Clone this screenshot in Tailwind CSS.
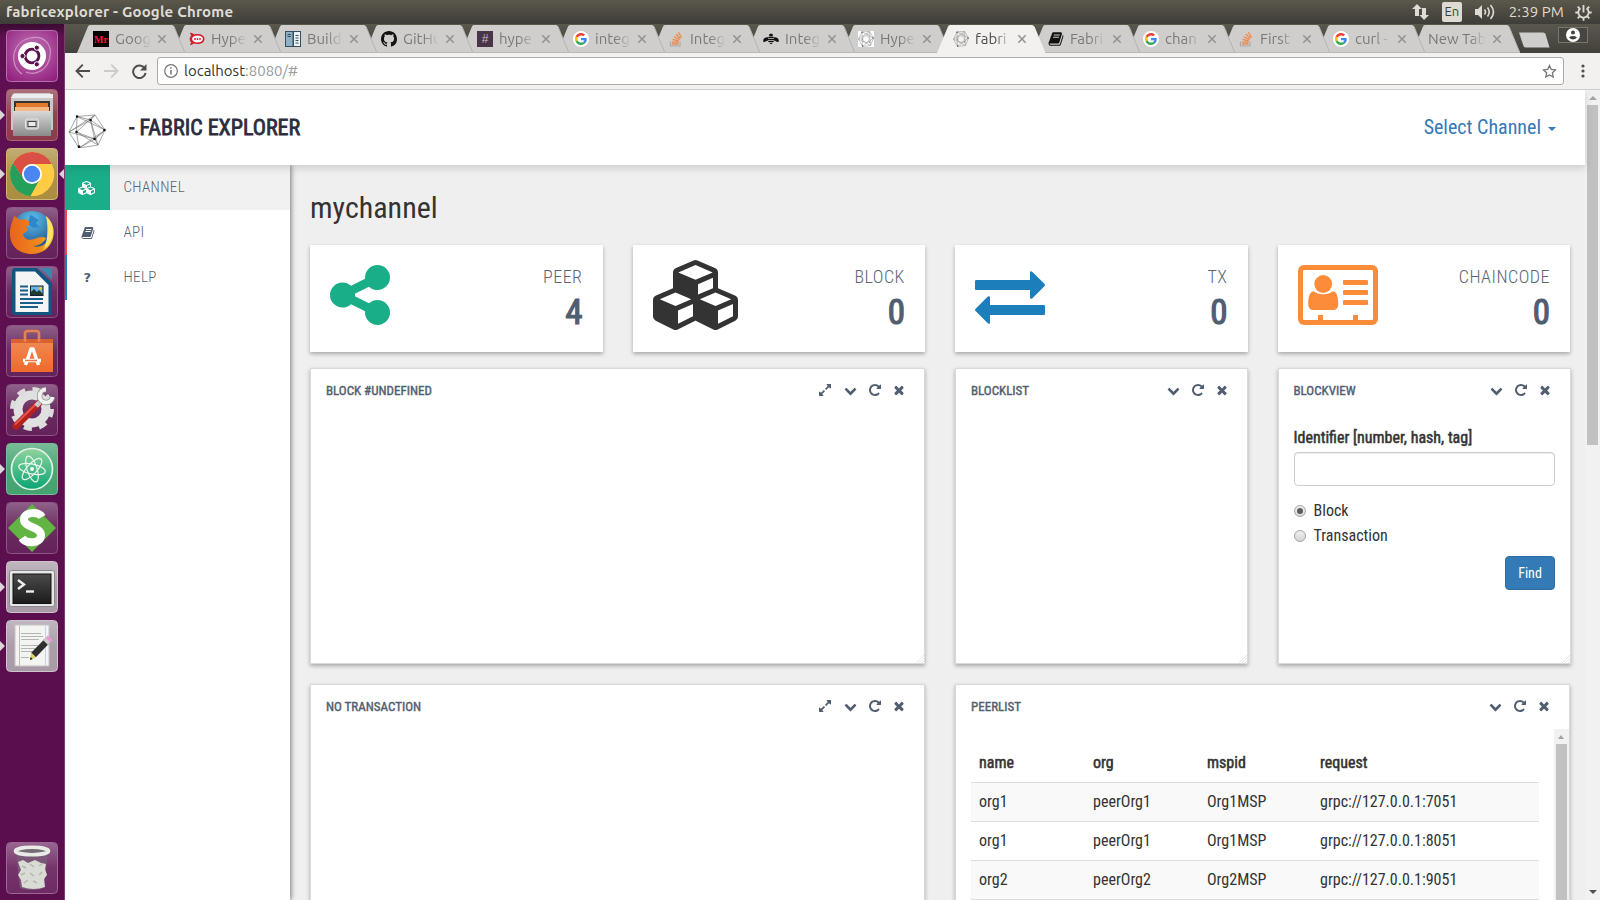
<!DOCTYPE html>
<html lang="en">
<head>
<meta charset="utf-8">
<title>fabricexplorer</title>
<script src="https://cdn.jsdelivr.net/npm/@tailwindcss/browser@4"></script>
</head>
<body class="h-[900px] w-[1600px] overflow-hidden bg-white font-['Roboto_Condensed',Roboto,sans-serif] text-[#333]">

<svg class="absolute h-0 w-0" xmlns="http://www.w3.org/2000/svg">
  <defs>
    <linearGradient id="gloss" x1="0" y1="0" x2="0" y2="1"><stop offset="0" stop-color="#fff" stop-opacity=".3"/><stop offset=".5" stop-color="#fff" stop-opacity=".07"/><stop offset="1" stop-color="#fff" stop-opacity=".03"/></linearGradient>
    <linearGradient id="steel" x1="0" y1="0" x2="0" y2="1"><stop offset="0" stop-color="#d9d9d9"/><stop offset="1" stop-color="#8b8b8b"/></linearGradient>
    <linearGradient id="orangeBag" x1="0" y1="0" x2="0" y2="1"><stop offset="0" stop-color="#f08a55"/><stop offset="1" stop-color="#ef6a2b"/></linearGradient>
    <linearGradient id="atomBg" x1="0" y1="0" x2="0" y2="1"><stop offset="0" stop-color="#8fd39c"/><stop offset="1" stop-color="#0aa573"/></linearGradient>
    <linearGradient id="termBg" x1="0" y1="0" x2="0" y2="1"><stop offset="0" stop-color="#4b4b4b"/><stop offset="1" stop-color="#1b1b1b"/></linearGradient>
    <radialGradient id="dash" cx=".5" cy=".4" r=".7"><stop offset="0" stop-color="#c27ab8"/><stop offset="1" stop-color="#93207f"/></radialGradient>
    <radialGradient id="globe" cx=".5" cy=".2" r=".8"><stop offset="0" stop-color="#5fc3ee"/><stop offset="1" stop-color="#123e7c"/></radialGradient>
    <linearGradient id="foxBody" x1="0" y1="0" x2="1" y2="0"><stop offset="0" stop-color="#e8641b"/><stop offset=".7" stop-color="#f08a1d"/><stop offset="1" stop-color="#fbd53c"/></linearGradient>
  </defs>
  <symbol id="i-share" viewBox="0 0 1792 1792"><path d="M1216 1024q133 0 226.5 93.5t93.5 226.500-93.500 226.500-226.500 93.500-226.500-93.500-93.500-226.500q0-12 2-34l-360-180q-92 86-218 86-133 0-226.500-93.500t-93.500-226.500 93.500-226.500 226.500-93.500q126 0 218 86l360-180q-2-22-2-34 0-133 93.500-226.500t226.500-93.500 226.500 93.500 93.500 226.500-93.500 226.500-226.500 93.500q-126 0-218-86l-360 180q2 22 2 34t-2 34l360 180q92-86 218-86z"/></symbol>
  <symbol id="i-cubes" viewBox="0 0 2304 1792"><path d="M640 1632l384-192v-314l-384 164v342zm-64-454l404-173-404-173-404 173zm1088 454l384-192v-314l-384 164v342zm-64-454l404-173-404-173-404 173zm-448-293l384-165v-266l-384 164v267zm-64-379l441-189-441-189-441 189zm1088 518v416q0 36-19 67t-52 47l-448 224q-25 14-57 14t-57-14l-448-224q-4-2-7-4-2 2-7 4l-448 224q-25 14-57 14t-57-14l-448-224q-33-16-52-47t-19-67v-416q0-38 21.500-70t56.500-48l434-186v-400q0-38 21.500-70t56.500-48l448-192q23-10 50-10t50 10l448 192q35 16 56.500 48t21.500 70v400l434 186q36 16 57 48t21 70z"/></symbol>
  <symbol id="i-exchange" viewBox="0 0 1792 1792"><path d="M1792 1184v192q0 13-9.500 22.500t-22.500 9.500h-1376v192q0 13-9.500 22.500t-22.500 9.500q-12 0-24-10l-319-320q-9-9-9-22 0-14 9-23l320-320q9-9 23-9 13 0 22.500 9.500t9.500 22.500v192h1376q13 0 22.500 9.500t9.500 22.500zm0-544q0 14-9 23l-320 320q-9 9-23 9-13 0-22.500-9.500t-9.500-22.500v-192h-1376q-13 0-22.500-9.500t-9.500-22.500v-192q0-13 9.500-22.500t22.500-9.500h1376v-192q0-14 9-23t23-9q12 0 24 10l319 319q9 9 9 23z"/></symbol>
  <symbol id="i-expand" viewBox="0 0 1792 1792"><path d="M883 1056q0 13-10 23l-332 332 144 144q19 19 19 45t-19 45-45 19h-448q-26 0-45-19t-19-45v-448q0-26 19-45t45-19 45 19l144 144 332-332q10-10 23-10t23 10l114 114q10 10 10 23zm781-864v448q0 26-19 45t-45 19-45-19l-144-144-332 332q-10 10-23 10t-23-10l-114-114q-10-10-10-23t10-23l332-332-144-144q-19-19-19-45t19-45 45-19h448q26 0 45 19t19 45z"/></symbol>
  <symbol id="i-down" viewBox="0 0 1792 1792"><path d="M1683 808l-742 741q-19 19-45 19t-45-19l-742-741q-19-19-19-45.500t19-45.500l166-165q19-19 45-19t45 19l531 531 531-531q19-19 45-19t45 19l166 165q19 19 19 45.500t-19 45.500z"/></symbol>
  <symbol id="i-repeat" viewBox="0 0 1792 1792"><path d="M1664 256v448q0 26-19 45t-45 19h-448q-42 0-59-40-17-39 14-69l138-138q-148-137-349-137-104 0-198.500 40.500t-163.500 109.500-109.500 163.500-40.500 198.500 40.500 198.500 109.500 163.500 163.500 109.500 198.500 40.500q119 0 225-52t179-147q7-10 23-12 15 0 25 9l137 138q9 8 9.500 20.500t-7.500 22.500q-109 132-264 204.500t-327 72.500q-156 0-298-61t-245-164-164-245-61-298 61-298 164-245 245-164 298-61q147 0 284.500 55.500t244.500 156.500l130-129q29-31 70-14 39 17 39 59z"/></symbol>
  <symbol id="i-times" viewBox="0 0 1792 1792"><path d="M1490 1322q0 40-28 68l-136 136q-28 28-68 28t-68-28l-294-294-294 294q-28 28-68 28t-68-28l-136-136q-28-28-28-68t28-68l294-294-294-294q-28-28-28-68t28-68l136-136q28-28 68-28t68 28l294 294 294-294q28-28 68-28t68 28l136 136q28 28 28 68t-28 68l-294 294 294 294q28 28 28 68z"/></symbol>
  <symbol id="i-book" viewBox="0 0 1792 1792"><path d="M1703 478q40 57 18 129l-275 906q-19 64-76.500 107.500t-122.500 43.500h-923q-77 0-148.500-53.500t-99.500-131.500q-24-67-2-127 0-4 3-27t4-37q1-8-3-21.500t-3-19.500q2-11 8-21t16.500-23.500 16.500-23.500q23-38 45-91.500t30-91.500q3-10 .5-30t-.5-28q3-11 17-28t17-23q21-36 42-92t25-90q1-9-2.500-32t.5-28q4-13 22-30.500t22-22.500q19-26 42.500-84.500t27.500-96.500q1-8-3-25.500t-2-26.500q2-8 9-18t18-23 17-21q8-12 16.500-30.500t15-35 16-36 19.500-32 26.500-23.500 36-11.500 47.500 5.500l-1 3q38-9 51-9h761q74 0 114 56t18 130l-274 906q-36 119-71.500 153.500t-128.500 34.500h-869q-27 0-38 15-11 16-1 43 24 70 144 70h923q29 0 56-15.500t35-41.500l300-987q7-22 5-57 38 15 59 43zm-1064 2q-4 13 2 22.500t20 9.500h608q13 0 25.500-9.500t16.500-22.500l21-64q4-13-2-22.500t-20-9.500h-608q-13 0-25.500 9.500t-16.500 22.500zm-83 256q-4 13 2 22.500t20 9.500h608q13 0 25.500-9.500t16.500-22.500l21-64q4-13-2-22.500t-20-9.500h-608q-13 0-25.500 9.500t-16.500 22.500z"/></symbol>
  <symbol id="i-card" viewBox="0 0 80 60"><rect x="2.500" y="2.500" width="75" height="55" rx="3.500" fill="none" stroke="currentColor" stroke-width="5"/><circle cx="25.200" cy="19" r="8.900"/><path d="M15.500 26.300c2.500 1.800 6 3 9.800 3s7.200-1.200 9.700-3c4 .6 5.300 6.500 5.300 12.200 0 4-1.800 6.500-5 6.500H15.200c-3.200 0-5-2.500-5-6.500 0-5.700 1.300-11.600 5.300-12.200z"/><rect x="45" y="15" width="25" height="5" rx="1"/><rect x="45" y="25" width="25" height="5" rx="1"/><rect x="45" y="35" width="25" height="5" rx="1"/><path d="M20 50h5v7h-5zM55 50h5v7h-5z"/></symbol>
  <symbol id="i-net" viewBox="0 0 38 34"><g fill="none" stroke="#777" stroke-width=".65"><path d="M9 2.500L27 1l10 15-7 15-19 3L1 18z"/><path d="M9 2.500L22.500 6 37 16 27 25 11 34 8.500 18z"/><path d="M27 1L8.500 18l21.500 13M27 1L22.500 6 30 31M1 18L22.500 6M1 18l25.500 7M37 16L9 2.500M27 1L1 18M37 16L26.500 25 30 31M8.500 18l18 7M37 16L11 34M22.500 6l4 19"/></g><g fill="#111"><rect x="7.900" y="1.400" width="2.300" height="2.300"/><rect x="21.500" y="5" width="2.200" height="2.200"/><rect x="35.300" y="14.900" width="2.300" height="2.300"/><rect x="25.500" y="23.900" width="2.200" height="2.200"/><rect x="9.800" y="31.500" width="2.400" height="2.400"/><rect x="7.400" y="16.900" width="2.200" height="2.200"/></g></symbol>
  <symbol id="i-netsmall" viewBox="0 0 16 16"><g fill="none" stroke="#888" stroke-width=".5"><path d="M4 .8L11.500.5 15.500 7l-3 7.500L4.500 15.500.5 8z"/><path d="M4 .8L15.500 7 4.500 15.500zM11.500.5L.5 8l12 6.500z"/><circle cx="8" cy="8" r="3.400"/></g><g fill="#555"><circle cx="4" cy="1.200" r=".7"/><circle cx="15" cy="7" r=".7"/><circle cx="4.600" cy="15" r=".7"/><circle cx="10" cy="3" r=".5"/><circle cx="4" cy="8" r=".5"/><circle cx="11.500" cy="11" r=".5"/></g></symbol>
  <symbol id="i-google" viewBox="0 0 48 48"><circle cx="24" cy="24" r="24" fill="#fff"/><g transform="translate(6 6) scale(.75)"><path fill="#EA4335" d="M24 9.500c3.540 0 6.710 1.220 9.210 3.600l6.850-6.850C35.900 2.380 30.470 0 24 0 14.620 0 6.510 5.380 2.560 13.220l7.980 6.190C12.430 13.720 17.740 9.500 24 9.500z"/><path fill="#4285F4" d="M46.980 24.550c0-1.570-.15-3.090-.38-4.550H24v9.020h12.940c-.58 2.960-2.260 5.480-4.780 7.180l7.730 6c4.510-4.180 7.090-10.360 7.090-17.650z"/><path fill="#FBBC05" d="M10.530 28.590c-.48-1.450-.76-2.990-.76-4.590s.27-3.140.76-4.590l-7.980-6.190C.92 16.460 0 20.120 0 24c0 3.880.92 7.540 2.560 10.780l7.970-6.190z"/><path fill="#34A853" d="M24 48c6.480 0 11.930-2.130 15.890-5.810l-7.730-6c-2.150 1.450-4.920 2.300-8.160 2.300-6.260 0-11.570-4.220-13.470-9.910l-7.980 6.190C6.510 42.620 14.620 48 24 48z"/></g></symbol>
  <symbol id="i-so" viewBox="0 0 16 16"><path d="M2.500 10.500v4.500h9.500v-4.500" fill="none" stroke="#a9a9a9" stroke-width="1.200"/><g stroke="#ee8a4c" stroke-width="1.300"><path d="M4 13h6.500M4 10.800l6.500.6M4.600 8.300l6.200 1.700M5.900 5.600l5.600 3.200M8 3l4.400 4.700M10.500 1.200l3 5.400"/></g></symbol>
  <symbol id="i-github" viewBox="0 0 16 16"><path d="M8 0C3.580 0 0 3.580 0 8c0 3.540 2.290 6.530 5.470 7.590.4.070.55-.17.55-.38 0-.19-.01-.82-.01-1.490-2.010.37-2.530-.49-2.690-.94-.09-.23-.48-.94-.82-1.130-.28-.15-.68-.52-.01-.53.63-.01 1.080.58 1.230.82.720 1.210 1.870.87 2.330.66.070-.52.280-.87.510-1.070-1.780-.2-3.640-.89-3.640-3.950 0-.87.310-1.590.82-2.150-.08-.2-.36-1.020.08-2.120 0 0 .67-.21 2.200.82.640-.18 1.320-.27 2-.27s1.360.09 2 .27c1.530-1.040 2.200-.82 2.200-.82.440 1.100.16 1.920.08 2.120.51.560.82 1.270.82 2.150 0 3.070-1.870 3.750-3.650 3.950.29.250.54.730.54 1.480 0 1.070-.01 1.930-.01 2.200 0 .21.150.46.550.38A8.010 8.010 0 0016 8c0-4.420-3.580-8-8-8z"/></symbol>
  <symbol id="i-chat" viewBox="0 0 16 16"><path d="M.7 1.800c1.900 0 3.400.6 4.500 1.600C6 3.100 7 3 8.200 3 12.500 3 15.500 5 15.500 8s-3 5-7.300 5c-1.200 0-2.200-.1-3.100-.4-1 .9-2.600 1.500-4.400 1.500.9-1 1.400-2 1.300-3C1 10.300.7 9.200.7 8s.4-2.200 1.300-3C2 3.900 1.600 2.800.7 1.800z" fill="#d1202f"/><ellipse cx="8.500" cy="8" rx="5.400" ry="3.400" fill="#fff"/><g fill="#d1202f"><circle cx="6" cy="8" r=".9"/><circle cx="8.500" cy="8" r=".9"/><circle cx="11" cy="8" r=".9"/></g></symbol>
  <symbol id="i-build" viewBox="0 0 16 16"><rect width="16" height="16" fill="#37505f"/><rect x="1" y="1" width="6.500" height="14" fill="#8fb0c2"/><rect x="9" y="1" width="6" height="14" fill="#eef2f4"/><path d="M2.500 3.500h3.500M2.500 5.500h3.500M10.500 4.500h3M10.500 7h3M10.500 9.500h3M10.500 12h3" stroke="#37505f"/></symbol>
  <symbol id="i-bee" viewBox="0 0 16 16"><path d="M6 4.200C6 3.300 7 2.800 8 2.800s2 .5 2 1.400l-.8 1H6.800zM.2 10C0 7.500 2 6 5.300 6.200L4.800 10C3.500 9 2.500 11 1.500 11S.3 10.600.2 10zM15.800 10C16 7.500 14 6 10.700 6.200l.5 3.800c1.300-1 2.300 1 3.300 1s1.200-.4 1.300-1zM5.500 5.800h5V7h-5zM5 7.800h6v1.200H5zM5.200 9.800h5.600V11H5.200zM6 11.700h4L8 13.200z"/></symbol>
  <symbol id="i-cross" viewBox="0 0 10 10"><path d="M1.300 1.300l7.400 7.400M8.700 1.300L1.300 8.700" stroke="currentColor" stroke-width="1.500"/></symbol>
  <symbol id="i-grip" viewBox="0 0 9 9"><path d="M1 9l8-8M4 9l5-5M7 9l2-2" stroke="#dedede" stroke-width=".8"/></symbol>
</svg>

<!-- System panel -->
<header class="flex h-6 items-center justify-between bg-linear-to-b from-[#5b584b] to-[#3e3d38] pr-[8px] pl-[6px] font-['Ubuntu','Noto_Sans',sans-serif] text-[15px] text-[#dfdbd2]">
  <span class="font-bold tracking-[0.180px]">fabricexplorer - Google Chrome</span>
  <div class="flex items-center">
    <svg class="h-[16px] w-[17px]" viewBox="0 0 17 16" fill="#dfdbd2"><path d="M5 0l5 5H7v7H3V5H0zM12 16l5-5h-3V4h-4v7H7.500z"/></svg>
    <span class="ml-[13px] flex h-5 w-5 items-center justify-center rounded-[2px] bg-[#dfdbd2] text-[13px] text-[#3e3d38]">En</span>
    <svg class="ml-[13px] h-[16px] w-[21px]" viewBox="0 0 21 16"><path d="M0 5h3l4-4v14l-4-4H0z" fill="#dfdbd2"/><path d="M9.500 5.500q2 2.500 0 5M12.500 3.500q3.500 4.500 0 9M15.500 1q6 7 0 14" fill="none" stroke="#dfdbd2" stroke-width="1.600"/></svg>
    <span class="ml-[13px] tracking-[0.100px]">2:39 PM</span>
    <svg class="ml-[11px] h-[17px] w-[17px]" viewBox="0 0 17 17" fill="none" stroke="#dfdbd2"><path d="M5.500 4.200a5.200 5.200 0 1 0 6 0" stroke-width="1.800"/><path d="M8.500 1v7.500" stroke-width="1.800"/><path d="M.3 8.500h3M13.700 8.500h3M8.500 13.500v3.300M2.700 14.300l2.200-2.200M14.300 14.300l-2.200-2.200M2.700 2.700l2 2M14.300 2.700l-2 2" stroke-width="1.800"/></svg>
  </div>
</header>

<div class="flex h-[876px] overflow-hidden">
  <!-- Launcher -->
  <nav class="relative flex w-[65px] shrink-0 flex-col items-start gap-[7px] border-r border-[#7d3c73] bg-linear-to-b from-[#3b0a33] via-[#5f1052] via-[1.500%] to-[#5a0e4d] pt-[6px] pl-[6px]">
    <svg class="size-[52px]" viewBox="0 0 52 52"><rect x=".5" y=".5" width="51" height="51" rx="4" fill="url(#dash)" stroke="#b470a8"/><path d="M16 44C2 34 6 12 24 8 38 5 46 14 44 26c-2 14-14 20-24 16" fill="none" stroke="#d9a6d2" stroke-width="1.200" opacity=".8"/><circle cx="26" cy="26" r="14" fill="#fff"/><circle cx="26" cy="26" r="6.900" fill="none" stroke="#5b0f4e" stroke-width="2.900"/><g fill="#5b0f4e" stroke="#fff" stroke-width="1"><circle cx="16.500" cy="26" r="2.600"/><circle cx="30.800" cy="17.700" r="2.600"/><circle cx="30.800" cy="34.300" r="2.600"/></g></svg>
    <svg class="size-[52px]" viewBox="0 0 52 52"><rect x=".5" y=".5" width="51" height="51" rx="4" fill="#893545" stroke="#a8646f"/><rect x="1" y="1" width="50" height="50" rx="4" fill="url(#gloss)"/><path d="M8 4h36l3 5v32H5V9z" fill="#c9c9c9"/><path d="M5 9h42V5H7z" fill="#ececec"/><rect x="8" y="12" width="36" height="12" fill="#3a332e"/><path d="M10 14h32v8H10z" fill="#e07b2c"/><path d="M9 18h34v4H9z" fill="#f5b981"/><path d="M7 22h38v25H7z" fill="url(#steel)"/><rect x="19.500" y="30" width="13" height="10" rx="2" fill="#bdbdbd" stroke="#e8e8e8"/><rect x="22" y="32.500" width="8" height="5" fill="#e8e8e8" stroke="#444"/></svg>
    <svg class="size-[52px]" viewBox="0 0 52 52"><rect x=".5" y=".5" width="51" height="51" rx="4" fill="#a98a3a" stroke="#cdb877"/><rect x="1" y="1" width="50" height="50" rx="4" fill="url(#gloss)"/><circle cx="26" cy="26" r="22" fill="#fc4"/><path d="M7 15a22 22 0 0 0 17.500 33L34 31 26 26 17.500 30z" fill="#24a05a"/><path d="M7 15A22 22 0 0 1 45.700 16H26A10 10 0 0 0 17 30z" fill="#db5044"/><path d="M45.700 16H26a10 10 0 0 1 8.500 15L25 48A22 22 0 0 0 45.700 16z" fill="#fc4"/><circle cx="26" cy="26" r="10" fill="#fff"/><circle cx="26" cy="26" r="8.200" fill="#4a86f0"/></svg>
    <svg class="size-[52px]" viewBox="0 0 52 52"><rect x=".5" y=".5" width="51" height="51" rx="4" fill="#5f1c55" stroke="#8d5585"/><rect x="1" y="1" width="50" height="50" rx="4" fill="url(#gloss)"/><circle cx="26" cy="25" r="21" fill="url(#globe)"/><path d="M24 8c4 1 6 4 9 5l-3 3 3 4-6 1-5-4z" fill="#2f86c8"/><path d="M8 9c2 1 4 2 6 4 3-1 6-1 9 1 1 3 0 5-3 6l2 3-5 4c1 5 6 7 11 5 5-2 9-3 12-1-2 5-8 8-13 8 9 3 18-4 17-18 0-5-2-9-5-12 8 5 10 14 8 22-3 11-12 16-21 16C12 47 4 38 4 27c0-7 1-9 4-18z" fill="url(#foxBody)"/><path d="M40 9c6 5 8 13 6 21-1 5-4 9-8 12 3-7 5-20 2-33z" fill="#fce46a"/></svg>
    <svg class="size-[52px]" viewBox="0 0 52 52"><rect x=".5" y=".5" width="51" height="51" rx="4" fill="#5f1c55" stroke="#8d5585"/><rect x="1" y="1" width="50" height="50" rx="4" fill="url(#gloss)"/><path d="M9 2h22l15 15v32H9a3 3 0 0 1-3-3V5a3 3 0 0 1 3-3z" fill="#0f5580"/><path d="M34 2h9q3 0 3 3v9z" fill="#3b86ad"/><path d="M9.500 5.500H29L42.500 19v27h-33z" fill="#f5f5f5"/><path d="M14 20.500h8M14 24.500h8M14 28.500h8M14 33h23M14 37h23M14 41h18" stroke="#1a5f8c" stroke-width="1.800"/><rect x="24.500" y="20" width="12.500" height="9.500" fill="#69b4e8" stroke="#123"/><path d="M25 29v-3l3-3 3 3 2-2 4 4v1z" fill="#1d3b33"/><circle cx="34.500" cy="22.500" r="1.400" fill="#f3cd37"/></svg>
    <svg class="size-[52px]" viewBox="0 0 52 52"><rect x=".5" y=".5" width="51" height="51" rx="4" fill="#5f1c55" stroke="#8d5585"/><rect x="1" y="1" width="50" height="50" rx="4" fill="url(#gloss)"/><path d="M5 14h42v33H5z" fill="url(#orangeBag)"/><path d="M5 14h42v4H5z" fill="#d9612f"/><path d="M19 17V9q0-3 3-3h8q3 0 3 3v8" fill="none" stroke="#e8834f" stroke-width="2.600"/><path d="M19.500 40l5.500-16h2l5.500 16M17 35.500h18" fill="none" stroke="#fff" stroke-width="3.400"/><path d="M19 35.500h12" stroke="#ef7a3c" stroke-width="1.500"/></svg>
    <svg class="size-[52px]" viewBox="0 0 52 52"><rect x=".5" y=".5" width="51" height="51" rx="4" fill="#5f1c55" stroke="#8d5585"/><rect x="1" y="1" width="50" height="50" rx="4" fill="url(#gloss)"/><circle cx="26" cy="25" r="14" fill="none" stroke="#e0e0e0" stroke-width="9"/><circle cx="26" cy="25" r="19.500" fill="none" stroke="#dcdcdc" stroke-width="5" stroke-dasharray="8 7.300"/><path d="M10 42L33 19" stroke="#b3221e" stroke-width="7" stroke-linecap="round"/><path d="M9.500 40L30 20" stroke="#e2564e" stroke-width="2" stroke-linecap="round"/><path d="M30 22l6-6" stroke="#c9c9c9" stroke-width="5"/><path d="M40 5.500a6.500 6.500 0 1 0 6.500 7.500" fill="none" stroke="#8f8f8f" stroke-width="5.500"/><path d="M40 5.500a6.500 6.500 0 1 0 6.500 7.500" fill="none" stroke="#f1f1f1" stroke-width="4"/></svg>
    <svg class="size-[52px]" viewBox="0 0 52 52"><rect x=".5" y=".5" width="51" height="51" rx="4" fill="#3fa06c" stroke="#75c097"/><rect x="1" y="1" width="50" height="50" rx="4" fill="url(#gloss)"/><circle cx="26" cy="26" r="20.500" fill="url(#atomBg)" stroke="#e3f2e8" stroke-width="1.700"/><g fill="none" stroke="#eaf7ee" stroke-width="1.200"><ellipse cx="26" cy="26" rx="13.500" ry="5" transform="rotate(12 26 26)"/><ellipse cx="26" cy="26" rx="13.500" ry="5" transform="rotate(72 26 26)"/><ellipse cx="26" cy="26" rx="13.500" ry="5" transform="rotate(132 26 26)"/></g><circle cx="26" cy="26" r="1.900" fill="#fff"/></svg>
    <svg class="size-[52px]" viewBox="0 0 52 52"><rect x=".5" y=".5" width="51" height="51" rx="4" fill="#5f1c55" stroke="#8d5585"/><rect x="1" y="1" width="50" height="50" rx="4" fill="url(#gloss)"/><path d="M26 2l24 24-24 24L2 26z" fill="#62b543"/><path d="M36 15c-3-5-17-6-18 2-1 9 18 7 17 17-1 8-15 8-19 2" fill="none" stroke="#fff" stroke-width="8"/></svg>
    <svg class="size-[52px]" viewBox="0 0 52 52"><rect x=".5" y=".5" width="51" height="51" rx="4" fill="#a597a4" stroke="#cdc4cc"/><rect x="1" y="1" width="50" height="50" rx="4" fill="url(#gloss)"/><rect x="3.500" y="9.500" width="45" height="36" rx="2" fill="#e6e6e6" stroke="#8a8a8a"/><rect x="7" y="13" width="38" height="29.500" fill="url(#termBg)" stroke="#111"/><path d="M12 19l6 4.500-6 4.500" fill="none" stroke="#eee" stroke-width="2.400"/><path d="M20 30.500h8" stroke="#eee" stroke-width="2.400"/></svg>
    <svg class="size-[52px]" viewBox="0 0 52 52"><rect x=".5" y=".5" width="51" height="51" rx="4" fill="#a597a4" stroke="#cdc4cc"/><rect x="1" y="1" width="50" height="50" rx="4" fill="url(#gloss)"/><rect x="9" y="5" width="34" height="41" fill="#f4f4f2" stroke="#c4c4c4"/><path d="M13.500 5.500v40" stroke="#f0a9a9"/><path d="M39.500 5.500v40" stroke="#b9c9ee" stroke-width=".8"/><path d="M15 13.500h20M15 16.500h22M15 19.500h18M15 25.500h20M15 28.500h16M15 31.500h18M15 37.500h8" stroke="#a5a5a5" stroke-width=".8"/><path d="M27.500 35L41 21" stroke="#2e2e2e" stroke-width="6.500"/><path d="M26 32l14-14" stroke="#666" stroke-width="1"/><path d="M24 40l1.200-7.500 5 5z" fill="#d9d46a"/><path d="M24 40l.6-3 2 2z" fill="#111"/><path d="M39.500 22.500l3-3" stroke="#ccc" stroke-width="6.500"/><path d="M42 20l2.200-2.200" stroke="#e89ad0" stroke-width="6.500"/></svg>
    <svg class="mt-auto mb-[6px] size-[52px]" viewBox="0 0 52 52"><rect x=".5" y=".5" width="51" height="51" rx="4" fill="#6b2560" stroke="#9a6892"/><rect x="1" y="1" width="50" height="50" rx="4" fill="url(#gloss)"/><path d="M10 10l4 36q12 4 24 0l4-36z" fill="#7a5878"/><path d="M12 20l5-2 5 3 7-3 6 3 5 1-1 5 2 6-3 4 1 8q-11 4-23 0l-1-7-3-5 3-5z" fill="#d9dcd4"/><path d="M16 24l4 2M24 22l4 3M33 24l3-2M15 33l4-2M24 31l4 3M33 33l3-3M18 41l4-3M27 39l4 2" stroke="#b3b7ad" stroke-width="1.500" fill="none"/><ellipse cx="26" cy="9" rx="16.500" ry="3.700" fill="#736c72" stroke="#e9ebe6" stroke-width="3.600"/></svg>
    <!-- running-window arrows -->
    <svg class="absolute top-0 left-0 h-[876px] w-[65px]" viewBox="0 0 65 876" fill="#dcd6da"><path d="M0 86l5 5-5 5zM0 145l5 5-5 5zM0 440l5 5-5 5zM0 558l5 5-5 5zM0 617l5 5-5 5zM64 145l-5 5 5 5z"/></svg>
  </nav>

  <div class="flex min-w-0 flex-1 flex-col">
    <!-- Tab strip -->
    <div class="flex h-[29px] shrink-0 items-start bg-linear-to-b from-[#5a574d] to-[#42413b] pt-px pl-3 font-['Ubuntu','Noto_Sans',sans-serif] text-[15px] text-[#7b7977]">
      <div id="tabs" class="isolate flex"></div>
      <svg class="mt-[7px] ml-[11px] h-4 w-8 shrink-0" viewBox="0 0 32 16"><path d="M1 .5h24q2 0 2.500 1.500l4 13.500H8q-2 0-2.500-1.500z" fill="#d0cecc"/></svg>
      <div class="mt-[2px] ml-[8px] flex h-4 w-[30px] shrink-0 items-center justify-center border border-[#77756e] bg-[#46453f]">
        <svg class="size-[14px]" viewBox="0 0 14 14"><circle cx="7" cy="7" r="7" fill="#fff"/><circle cx="7" cy="4.600" r="2" fill="#42413b"/><path d="M3 9.200q4-2.400 8 0-1.500 2.300-4 2.300t-4-2.300z" fill="#42413b"/></svg>
      </div>
    </div>

    <!-- Toolbar -->
    <div class="flex h-[37px] shrink-0 items-center border-b border-[#cfcdcb] bg-[#f2f1f0] pl-[10px]">
      <svg class="h-[14px] w-[15px]" viewBox="0 0 15 14" fill="none" stroke="#4d4d4d" stroke-width="1.900"><path d="M15 7H1.500M7.800.7L1.500 7l6.300 6.300"/></svg>
      <svg class="ml-[14px] h-[14px] w-[15px]" viewBox="0 0 15 14" fill="none" stroke="#cdcbc9" stroke-width="1.900"><path d="M0 7h13.500M7.200.7L13.500 7l-6.300 6.300"/></svg>
      <svg class="ml-[13px] h-[15px] w-[15px]" viewBox="0 0 15 15"><path d="M12.700 4.300A6.300 6.300 0 1 0 13.600 9" fill="none" stroke="#4d4d4d" stroke-width="2"/><path d="M14.500 0v6.500H8z" fill="#4d4d4d"/></svg>
      <div class="ml-[10px] flex h-7 w-[1407px] items-center rounded-[3px] border border-[#acabaa] bg-white px-[6px] font-['Ubuntu','Noto_Sans',sans-serif] text-[15px]">
        <svg class="size-[14px]" viewBox="0 0 14 14"><circle cx="7" cy="7" r="6.300" fill="none" stroke="#757575" stroke-width="1.200"/><path d="M7 6v4.500M7 3.200v1.600" stroke="#757575" stroke-width="1.500"/></svg>
        <span class="ml-[6px] text-[#333]">localhost<span class="text-[#9a9a9a]">:8080/#</span></span>
        <svg class="ml-auto h-[14px] w-[15px]" viewBox="0 0 15 14"><path d="M7.500 1.500l1.800 3.900 4.200.5-3.100 2.900.8 4.200-3.700-2.100L3.800 13l.8-4.200L1.500 5.900l4.200-.5z" fill="none" stroke="#757575" stroke-width="1.300"/></svg>
      </div>
      <svg class="ml-[17px] h-[14px] w-[4px]" viewBox="0 0 4 14" fill="#4d4d4d"><circle cx="2" cy="2" r="1.600"/><circle cx="2" cy="7" r="1.600"/><circle cx="2" cy="12" r="1.600"/></svg>
    </div>

    <!-- Page -->
    <div class="flex min-h-0 flex-1 overflow-hidden">
      <div class="flex w-[1520px] shrink-0 flex-col">
        <div class="relative z-10 flex h-[75px] shrink-0 items-center bg-white pr-[29px] pb-[1px] pl-[3px] shadow-[0_3px_8px_rgba(0,0,0,0.15)]">
          <svg class="mt-[7px] h-[34px] w-[38px]"><use href="#i-net"/></svg>
          <span class="ml-[23px] text-[22px] text-[#2b2d3d] [-webkit-text-stroke:0.8px_#2b2d3d]">- FABRIC EXPLORER</span>
          <span class="-mt-[1px] ml-auto text-[20px] text-[#337ab7]">Select Channel</span>
          <span class="mt-[3px] ml-[7px] h-0 w-0 border-x-4 border-t-4 border-x-transparent border-t-[#337ab7]"></span>
        </div>
        <div class="flex min-h-0 flex-1">
          <aside class="z-[5] w-[225px] shrink-0 bg-white text-[15px] font-[350] tracking-[0.350px] text-[#5a6676] shadow-[1px_0_5px_rgba(0,0,0,0.5)]">
            <div class="flex h-[45px] items-center bg-[#f1f1f1]"><span class="flex h-full w-[45px] items-center justify-center bg-[#1aae88] pr-[1px] text-white"><svg class="h-[14px] w-[18px]" fill="currentColor"><use href="#i-cubes"/></svg></span><span class="ml-[13.500px]">CHANNEL</span></div>
            <div class="flex h-[45px] items-center"><span class="flex h-full w-[45px] items-center justify-center border-l-2 border-[#f04848] pr-[2px] text-[#515e70]"><svg class="size-[14px]" fill="currentColor"><use href="#i-book"/></svg></span><span class="ml-[13.500px]">API</span></div>
            <div class="flex h-[45px] items-center"><span class="flex h-full w-[45px] items-center justify-center border-l-2 border-[#1c7ebb] pr-[2px] font-['DejaVu_Sans'] text-[13px] font-bold text-[#515e70]">?</span><span class="ml-[13.500px]">HELP</span></div>
          </aside>
          <main class="flex-1 bg-[#efefef] px-5 pt-[23px]">
            <h1 class="h-[57px] text-[30px] leading-[40px]">mychannel</h1>
            <section class="flex gap-[30px]">
              <div class="flex h-[107px] flex-1 justify-between bg-white px-5 pt-[15px] shadow-[0_2px_4px_rgba(0,0,0,0.3)]"><svg class="size-[70px] text-[#1aae88]" fill="currentColor"><use href="#i-share"/></svg><div class="text-right text-[#5a6676]"><div class="mt-[4px] text-[18px] leading-[26px] font-[350] tracking-[0.500px]">PEER</div><div class="mt-[2px] text-[35px] leading-[42px] text-[#515e70] [-webkit-text-stroke:1.2px_#515e70]">4</div></div></div>
              <div class="flex h-[107px] flex-1 justify-between bg-white px-5 pt-[15px] shadow-[0_2px_4px_rgba(0,0,0,0.3)]"><svg class="h-[70px] w-[90px] text-[#333]" fill="currentColor"><use href="#i-cubes"/></svg><div class="text-right text-[#5a6676]"><div class="mt-[4px] text-[18px] leading-[26px] font-[350] tracking-[0.500px]">BLOCK</div><div class="mt-[2px] text-[35px] leading-[42px] text-[#515e70] [-webkit-text-stroke:1.2px_#515e70]">0</div></div></div>
              <div class="flex h-[107px] flex-1 justify-between bg-white px-5 pt-[15px] shadow-[0_2px_4px_rgba(0,0,0,0.3)]"><svg class="size-[70px] text-[#1c7ebb]" fill="currentColor"><use href="#i-exchange"/></svg><div class="text-right text-[#5a6676]"><div class="mt-[4px] text-[18px] leading-[26px] font-[350] tracking-[0.500px]">TX</div><div class="mt-[2px] text-[35px] leading-[42px] text-[#515e70] [-webkit-text-stroke:1.2px_#515e70]">0</div></div></div>
              <div class="flex h-[107px] flex-1 justify-between bg-white px-5 pt-[15px] shadow-[0_2px_4px_rgba(0,0,0,0.3)]"><svg class="mt-[5px] h-[60px] w-[80px] text-[#fd8c3a]" fill="currentColor"><use href="#i-card"/></svg><div class="text-right text-[#5a6676]"><div class="mt-[4px] text-[18px] leading-[26px] font-[350] tracking-[0.500px]">CHAINCODE</div><div class="mt-[2px] text-[35px] leading-[42px] text-[#515e70] [-webkit-text-stroke:1.2px_#515e70]">0</div></div></div>
            </section>

            <section class="mt-4 grid grid-cols-[615px_292.5px_292.5px] gap-x-[30px] gap-y-5">
              <div class="relative h-[296px] border border-[#dadada] bg-white px-[15px] shadow-[0_2px_4px_rgba(0,0,0,0.3)]">
                <div class="flex h-[42px] items-center text-[#515e70]"><span class="mt-[2px] mr-auto text-[13px] [-webkit-text-stroke:0.4px_#515e70]">BLOCK #UNDEFINED</span><svg class="mr-[12px] size-[14px]" fill="currentColor"><use href="#i-expand"/></svg><svg class="mr-[11px] size-[13px]" fill="currentColor"><use href="#i-down"/></svg><svg class="mr-[10px] size-[14px]" fill="currentColor"><use href="#i-repeat"/></svg><svg class="mr-[3px] size-[14px]" fill="currentColor"><use href="#i-times"/></svg></div>
                <svg class="absolute right-0 bottom-0 size-[9px]"><use href="#i-grip"/></svg>
              </div>
              <div class="relative h-[296px] border border-[#dadada] bg-white px-[15px] shadow-[0_2px_4px_rgba(0,0,0,0.3)]">
                <div class="flex h-[42px] items-center text-[#515e70]"><span class="mt-[2px] mr-auto text-[13px] [-webkit-text-stroke:0.4px_#515e70]">BLOCKLIST</span><svg class="mr-[11px] size-[13px]" fill="currentColor"><use href="#i-down"/></svg><svg class="mr-[10px] size-[14px]" fill="currentColor"><use href="#i-repeat"/></svg><svg class="mr-[3px] size-[14px]" fill="currentColor"><use href="#i-times"/></svg></div>
                <svg class="absolute right-0 bottom-0 size-[9px]"><use href="#i-grip"/></svg>
              </div>
              <div class="relative -mr-px h-[296px] border border-[#dadada] bg-white px-[15px] shadow-[0_2px_4px_rgba(0,0,0,0.3)]">
                <div class="flex h-[42px] items-center text-[#515e70]"><span class="mt-[2px] mr-auto text-[13px] [-webkit-text-stroke:0.4px_#515e70]">BLOCKVIEW</span><svg class="mr-[11px] size-[13px]" fill="currentColor"><use href="#i-down"/></svg><svg class="mr-[10px] size-[14px]" fill="currentColor"><use href="#i-repeat"/></svg><svg class="mr-[3.500px] size-[14px]" fill="currentColor"><use href="#i-times"/></svg></div>
                <div class="mt-[14px] text-[16px] leading-[25px] [-webkit-text-stroke:0.5px_#333]">Identifier [number, hash, tag]</div>
                <div class="mt-[2px] h-[34px] rounded border border-[#ccc] shadow-[inset_0_1px_1px_rgba(0,0,0,0.075)]"></div>
                <label class="mt-[12px] flex h-[25px] items-center gap-2 text-[16px]"><span class="flex size-3 items-center justify-center rounded-full border border-[#a5a5a5] bg-linear-to-b from-[#f0f0f0] to-[#dcdcdc]"><i class="size-[6px] rounded-full bg-[#5c5c5c]"></i></span>Block</label>
                <label class="flex h-[25px] items-center gap-2 text-[16px]"><span class="size-3 rounded-full border border-[#a5a5a5] bg-linear-to-b from-[#f0f0f0] to-[#d4d4d4]"></span>Transaction</label>
                <div class="mt-[8px] ml-auto flex h-[34px] w-[50px] items-center justify-center rounded border border-[#2e6da4] bg-[#337ab7] text-[14px] text-white">Find</div>
                <svg class="absolute right-0 bottom-0 size-[9px]"><use href="#i-grip"/></svg>
              </div>
              <div class="h-[296px] border border-[#dadada] bg-white px-[15px] shadow-[0_2px_4px_rgba(0,0,0,0.3)]">
                <div class="flex h-[42px] items-center text-[#515e70]"><span class="mt-[2px] mr-auto text-[13px] [-webkit-text-stroke:0.4px_#515e70]">NO TRANSACTION</span><svg class="mr-[12px] size-[14px]" fill="currentColor"><use href="#i-expand"/></svg><svg class="mr-[11px] size-[13px]" fill="currentColor"><use href="#i-down"/></svg><svg class="mr-[10px] size-[14px]" fill="currentColor"><use href="#i-repeat"/></svg><svg class="mr-[3px] size-[14px]" fill="currentColor"><use href="#i-times"/></svg></div>
              </div>
              <div class="col-span-2 h-[296px] border border-[#dadada] bg-white pl-[15px] shadow-[0_2px_4px_rgba(0,0,0,0.3)]">
                <div class="flex h-[42px] items-center pr-[15px] text-[#515e70]"><span class="mt-[2px] mr-auto text-[13px] [-webkit-text-stroke:0.4px_#515e70]">PEERLIST</span><svg class="mr-[11px] size-[13px]" fill="currentColor"><use href="#i-down"/></svg><svg class="mr-[10px] size-[14px]" fill="currentColor"><use href="#i-repeat"/></svg><svg class="mr-[3px] size-[14px]" fill="currentColor"><use href="#i-times"/></svg></div>
                <div class="mt-[2px] flex justify-between">
                  <div class="mt-[14px] w-[568px] text-[16px]">
                    <div class="grid h-[39px] grid-cols-[114px_114px_113px_1fr] items-center px-2 [-webkit-text-stroke:0.5px_#333]"><span>name</span><span>org</span><span>mspid</span><span>request</span></div>
                    <div class="grid h-[39px] grid-cols-[114px_114px_113px_1fr] items-center border-t border-[#ddd] bg-[#f9f9f9] px-2"><span>org1</span><span>peerOrg1</span><span>Org1MSP</span><span>grpc://127.0.0.1:7051</span></div>
                    <div class="grid h-[39px] grid-cols-[114px_114px_113px_1fr] items-center border-t border-[#ddd] px-2"><span>org1</span><span>peerOrg1</span><span>Org1MSP</span><span>grpc://127.0.0.1:8051</span></div>
                    <div class="grid h-[40px] grid-cols-[114px_114px_113px_1fr] items-center border-y border-[#ddd] bg-[#f9f9f9] px-2"><span>org2</span><span>peerOrg2</span><span>Org2MSP</span><span>grpc://127.0.0.1:9051</span></div>
                  </div>
                  <div class="h-[200px] w-[15px] bg-[#f1f1f1]"><div class="mx-auto h-[15px] w-[7px] pt-[6px]"><div class="h-0 w-0 border-x-[3.5px] border-b-4 border-x-transparent border-b-[#a3a3a3]"></div></div><div class="mx-[2px] h-[185px] bg-[#c1c1c1]"></div></div>
                </div>
              </div>
            </section>
          </main>
        </div>
      </div>
      <!-- Page scrollbar -->
      <div class="flex w-[15px] flex-col items-center bg-[#f1f1f1]">
        <div class="mt-[6px] h-0 w-0 border-x-4 border-b-4 border-x-transparent border-b-[#a3a3a3]"></div>
        <div class="mt-[5px] h-[340px] w-[11px] bg-[#c1c1c1]"></div>
        <div class="mt-auto mb-[6px] h-0 w-0 border-x-4 border-t-4 border-x-transparent border-t-[#505050]"></div>
      </div>
    </div>
  </div>
</div>

<script>
const use = id => `<svg class="size-4 shrink-0" fill="#111"><use href="#${id}"/></svg>`;
const tabs = [
  ['Goog', `<span class="flex size-4 shrink-0 items-center justify-center overflow-hidden bg-black font-['Liberation_Serif'] text-[10px] font-bold text-[#ff1744]">Mr</span>`],
  ['Hype', use('i-chat')], ['Build', use('i-build')], ['GitHu', use('i-github')],
  ['hype', `<span class="flex size-4 shrink-0 items-center justify-center bg-[#4a3448] font-['Liberation_Sans'] text-[12px] text-[#c9bcc8]">#</span>`],
  ['integ', use('i-google')], ['Integ', use('i-so')], ['Integ', use('i-bee')],
  ['Hype', `<svg class="size-4 shrink-0 bg-white"><use href="#i-netsmall"/></svg>`],
  ['fabri', `<svg class="size-4 shrink-0"><use href="#i-netsmall"/></svg>`],
  ['Fabri', use('i-book')], ['chan', use('i-google')], ['First', use('i-so')], ['curl -', use('i-google')], ['New Tab', '']
];
document.getElementById('tabs').innerHTML = tabs.map(([t, icon], i) => {
  const on = i === 9;
  return `<div class="relative ${i < 5 ? '-mr-[12px]' : '-mr-[13px]'} flex h-7 w-[108px] shrink-0 items-center pr-[18px] pl-4 ${on ? 'text-[#4c4c4c]' : ''}" style="z-index:${on ? 20 : 15 - i}">
    <svg class="absolute inset-0 -z-10 h-7 w-[108px]" viewBox="0 0 108 28"><path d="M0 28L11 1.500Q11.500 0 13 0H95Q96.500 0 97 1.500L108 28z" fill="${on ? '#f2f1f0' : '#d0cecc'}"/><path d="M97 1.500L108 28" stroke="${on ? '#f2f1f0' : '#b5b3b1'}"/>${on ? '' : '<path d="M0 27.500H108" stroke="#bab8b6"/>'}</svg>
    ${icon}
    <span class="${icon ? 'ml-[6px]' : ''} min-w-0 flex-1 overflow-hidden whitespace-nowrap [mask-image:linear-gradient(to_right,#000_calc(100%-16px),transparent)]">${t}</span>
    <svg class="ml-[6px] size-[10px] shrink-0 text-[#93918f]"><use href="#i-cross"/></svg>
  </div>`;
}).join('');
</script>
</body>
</html>
